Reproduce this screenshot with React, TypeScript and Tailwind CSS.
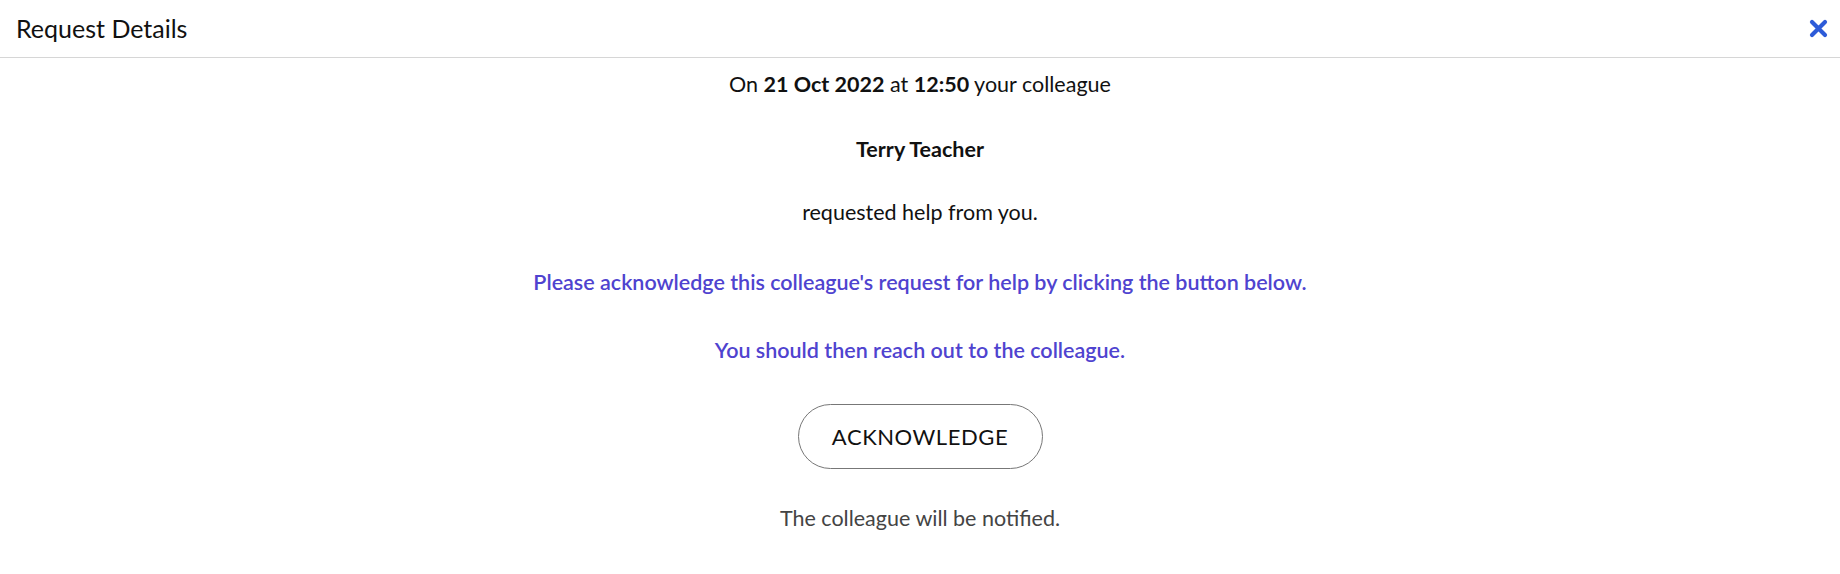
const font = { fontFamily: "Lato, 'Open Sans', sans-serif" };

export default function App() {
  return (
    <div className="w-[1840px] h-[574px] bg-white text-[#111]" style={font}>
      {/* Header */}
      <div className="h-[58px] flex items-center justify-between pl-[16px] pr-[12px] border-b border-[#d6d6d6]">
        <h1 className="text-[25px] font-normal">Request Details</h1>
        <button className="text-[#2d5bd8] mb-[1px]">
          <svg width="19" height="19" viewBox="0 0 19 19" fill="none" stroke="currentColor" strokeWidth="4.2" strokeLinecap="round">
            <path d="M3 3 L16 16 M16 3 L3 16" />
          </svg>
        </button>
      </div>

      {/* Body */}
      <div className="flex flex-col items-center text-[21.5px] leading-[27px]">
        <p className="mt-[13px]">
          On <b>21 Oct 2022</b> at <b>12:50</b> your colleague
        </p>
        <p className="mt-[38px] font-bold">Terry Teacher</p>
        <p className="mt-[36px]">requested help from you.</p>
        <p className="mt-[43px] font-semibold text-[#4f43cf]">
          Please acknowledge this colleague's request for help by clicking the button below.
        </p>
        <p className="mt-[41px] font-semibold text-[#4f43cf]">
          You should then reach out to the colleague.
        </p>
        <button className="mt-[40px] w-[245px] h-[65px] rounded-full border border-[#777] text-[22px] tracking-wide">
          ACKNOWLEDGE
        </button>
        <p className="mt-[36px] text-[#444]">The colleague will be notified.</p>
      </div>
    </div>
  );
}
